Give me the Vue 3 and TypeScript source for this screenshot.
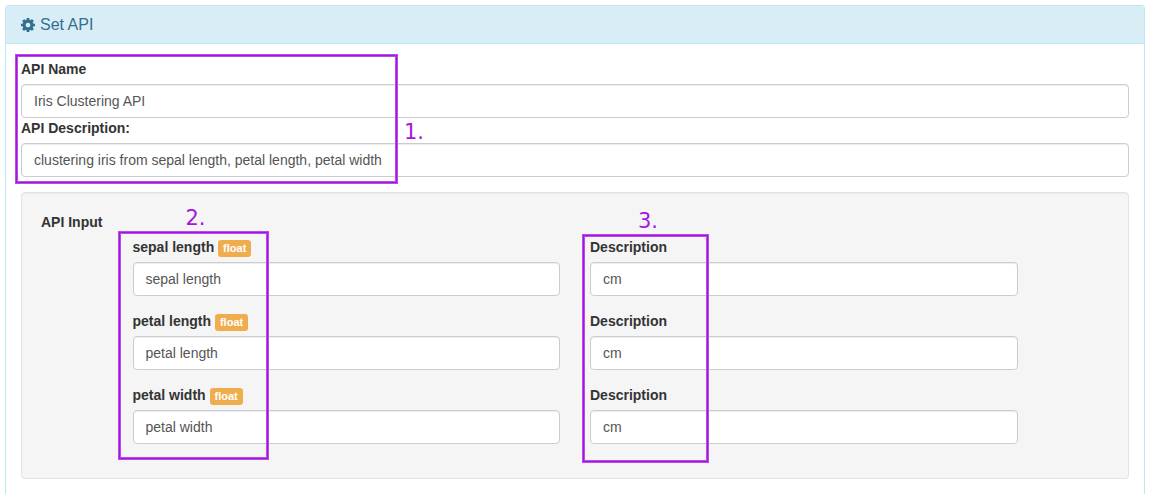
<script setup lang="ts">
import { reactive } from 'vue'

interface ApiInput {
  id: string
  label: string
  type: string
  value: string
  description: string
}

const api = reactive({
  name: 'Iris Clustering API',
  description: 'clustering iris from sepal length, petal length, petal width',
})

const inputs = reactive<ApiInput[]>([
  { id: 'sepal-length', label: 'sepal length', type: 'float', value: 'sepal length', description: 'cm' },
  { id: 'petal-length', label: 'petal length', type: 'float', value: 'petal length', description: 'cm' },
  { id: 'petal-width', label: 'petal width', type: 'float', value: 'petal width', description: 'cm' },
])
</script>

<template>
  <section class="panel">
    <header class="panel-heading">
      <svg class="cog" viewBox="0 128 1536 1536" aria-hidden="true">
        <path
          d="M1024 896q0-106-75-181t-181-75-181 75-75 181 75 181 181 75 181-75 75-181zm512-109v222q0 12-8 23t-20 13l-185 28q-19 54-39 91 35 50 107 138 10 12 10 25t-9 23q-27 37-99 108t-94 71q-12 0-26-9l-138-108q-44 23-91 38-16 136-29 186-7 28-36 28h-222q-14 0-24.500-8.500t-11.500-21.500l-28-184q-49-16-90-37l-141 107q-10 9-25 9-14 0-25-11-126-114-165-168-7-10-7-23 0-12 8-23 15-21 51-66.500t54-70.500q-27-50-41-99l-183-27q-13-2-21-12.500t-8-23.500v-222q0-12 8-23t19-13l186-28q14-46 39-92-40-57-107-138-10-12-10-24 0-10 9-23 26-36 98.500-107.500t94.500-71.500q13 0 26 10l138 107q44-23 91-38 16-136 29-186 7-28 36-28h222q14 0 24.500 8.500t11.500 21.500l28 184q49 16 90 37l142-107q9-9 24-9 13 0 25 10 129 119 165 170 7 8 7 22 0 12-8 23-15 21-51 66.500t-54 70.500q26 50 41 98l183 28q13 2 21 12.500t8 23.500z"
        />
      </svg>
      <h3 class="panel-title">Set API</h3>
    </header>

    <form class="panel-body" @submit.prevent>
      <div class="general">
        <label for="api-name">API Name</label>
        <input id="api-name" v-model="api.name" class="control" type="text" />
        <label for="api-description">API Description:</label>
        <input id="api-description" v-model="api.description" class="control" type="text" />
        <div class="mark mark-general"><span class="number">1.</span></div>
      </div>

      <fieldset class="well" aria-labelledby="input-heading">
        <div id="input-heading" class="well-title">API Input</div>
        <div class="columns">
          <div class="column column-names">
            <div class="stack">
              <div v-for="item in inputs" :key="item.id" class="group">
                <label :for="item.id">{{ item.label }} <span class="badge">{{ item.type }}</span></label>
                <input :id="item.id" v-model="item.value" class="control" type="text" />
              </div>
              <div class="mark mark-names"><span class="number">2.</span></div>
            </div>
          </div>
          <div class="column">
            <div class="stack">
              <div v-for="item in inputs" :key="item.id" class="group">
                <label :for="item.id + '-description'">Description</label>
                <input :id="item.id + '-description'" v-model="item.description" class="control" type="text" />
              </div>
              <div class="mark mark-descriptions"><span class="number">3.</span></div>
            </div>
          </div>
        </div>
      </fieldset>
    </form>
  </section>
</template>

<style>
body {
  margin: 0;
  background: #fff;
}
#app {
  display: flow-root;
}
</style>

<style scoped>
* {
  box-sizing: border-box;
}
.panel {
  margin: 5px 6px 0 5px;
  border: 1px solid #bce8f1;
  border-bottom: 0;
  border-radius: 4px 4px 0 0;
  font-family: "Liberation Sans", Arial, sans-serif;
  font-size: 14px;
  line-height: 20px;
  color: #333;
}
.panel-heading {
  display: flex;
  align-items: center;
  gap: 5px;
  padding: 9px 15px 8px;
  border-bottom: 1px solid #bce8f1;
  border-radius: 3px 3px 0 0;
  background: #d9edf7;
  color: #31708f;
}
.cog {
  width: 14px;
  height: 14px;
  fill: currentColor;
}
.panel-title {
  margin: 0;
  font-size: 16px;
  line-height: 20px;
  font-weight: 400;
}
.panel-body {
  padding: 15px;
}
.general {
  position: relative;
  margin-bottom: 15px;
}
label,
.well-title {
  display: block;
  margin-bottom: 5px;
  font-weight: 700;
}
.control {
  display: block;
  width: 100%;
  height: 34px;
  padding: 6px 12px;
  border: 1px solid #ccc;
  border-radius: 4px;
  background: #fff;
  box-shadow: inset 0 1px 1px rgba(0, 0, 0, 0.075);
  font: inherit;
  color: #555;
}
.well {
  min-width: 0;
  margin: 0;
  padding: 19px;
  border: 1px solid #e3e3e3;
  border-radius: 4px;
  background: #f5f5f5;
  box-shadow: inset 0 1px 1px rgba(0, 0, 0, 0.05);
}
.columns {
  display: grid;
  grid-template-columns: 1fr 5fr 5fr 1fr;
  margin: 0 -15px;
}
.column {
  min-width: 0;
  padding: 0 15px;
}
.column-names {
  grid-column: 2;
}
.stack {
  position: relative;
}
.group {
  padding-bottom: 15px;
}
.badge {
  display: inline-block;
  padding: 0 5px;
  border-radius: 3px;
  background: #f0ad4e;
  font-size: 11px;
  line-height: 17px;
  color: #fff;
}
.mark {
  position: absolute;
  border: 1px solid #a414df;
  box-shadow: 0 0 0 1px #bb4aea, inset 0 0 0 1px #bb4aea;
  pointer-events: none;
}
.mark-general {
  top: -4px;
  left: -5px;
  width: 381px;
  bottom: -6px;
}
.mark-names {
  top: -5px;
  left: -14px;
  width: 149px;
  bottom: 0;
}
.mark-descriptions {
  top: -2px;
  left: -7px;
  width: 125px;
  bottom: -3px;
}
.number {
  position: absolute;
  font-family: "DejaVu Sans", sans-serif;
  font-size: 21px;
  line-height: 30px;
  color: #a814e0;
}
.mark-general .number {
  top: 61px;
  left: 387px;
}
.mark-names .number,
.mark-descriptions .number {
  bottom: 100%;
  left: 66px;
}
.mark-descriptions .number {
  left: 54px;
}
</style>
